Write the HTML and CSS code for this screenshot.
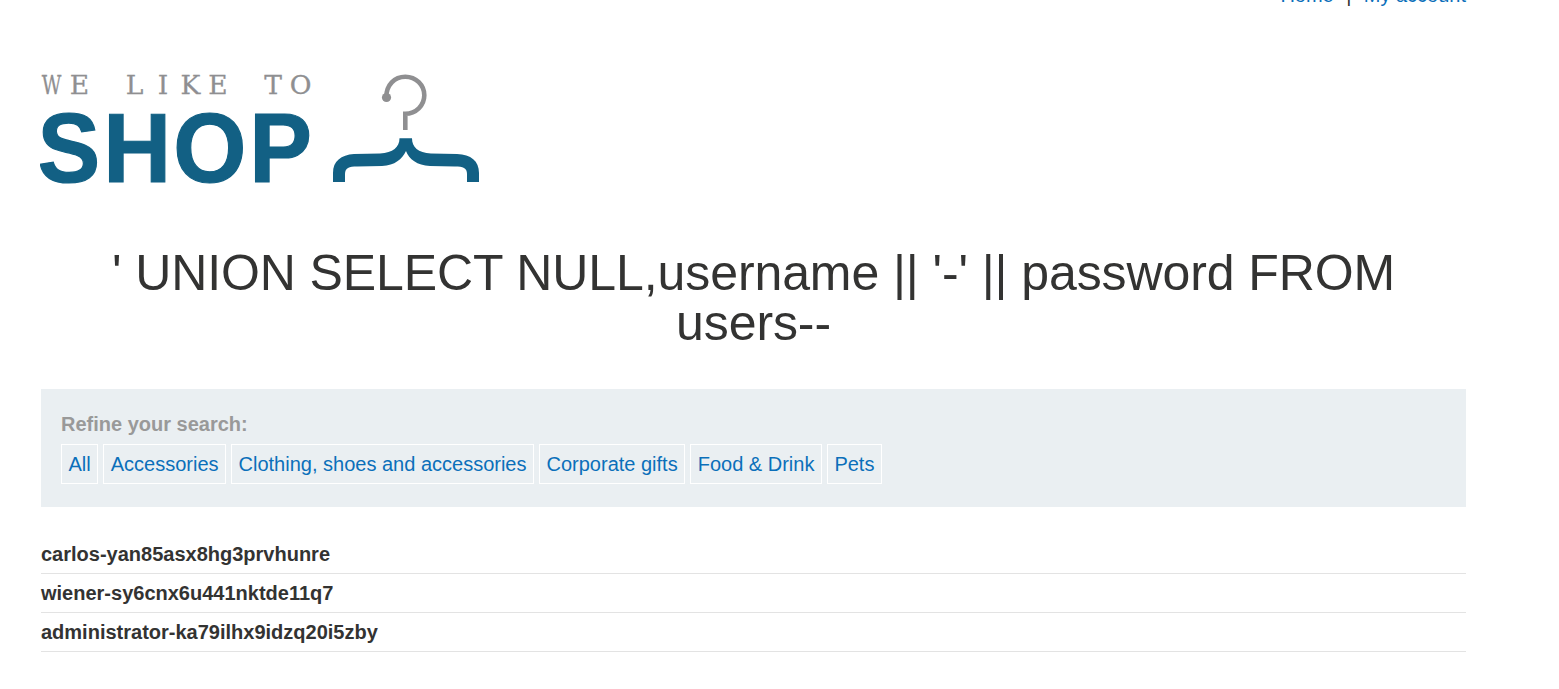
FILE: index.html
```
<!DOCTYPE html>
<html lang="en">
<head>
<meta charset="utf-8">
<title>We like to shop</title>
<link rel="stylesheet" href="styles.css">
</head>
<body>
<div class="container">
  <nav class="top-links"><a href="#">Home</a><span>|</span><a href="#">My account</a></nav>
  <header class="brand">
    <svg class="logo" width="440" height="120" viewBox="40 70 440 120" role="img" aria-label="We like to shop">
      <text class="tagline" transform="translate(51.5 94) scale(.72 1)" x="0" y="0">W</text>
      <text class="tagline" x="79.5 134.500 163 190.500 218 273 300.500" y="94">ELIKETO</text>
      <text class="wordmark" transform="scale(.95 1)" x="39.500 108.700 182.400 262.400" y="182">SHOP</text>
      <circle cx="386.500" cy="97.500" r="4.600" fill="#8f8f91"/>
      <path d="M386.300 97 C386.300 85 394.500 76.700 405.300 76.700 C416 76.700 424.300 85 424.300 95.300 C424.300 105.500 416 113.700 405.300 113.700 V130" fill="none" stroke="#8f8f91" stroke-width="4.600"/>
      <path d="M333 182 V173 C333 161 341 155 354 154 L380 153.500 C393 153 399.500 147 399.500 138.300 H412 C412 147 418 153 431 153.500 L457 154 C471 154.500 479 161 479 173 V182 H467 V174 C467 168 463 166.500 455 166.500 L430 166 C417 165.500 409 159 406 151 C402 159 395 165.500 382 166 L357 166.500 C349 166.500 345 168 345 174 V182 Z" fill="#126084"/>
    </svg>
  </header>
  <h1 class="title">' UNION SELECT NULL,username || '-' || password FROM users--</h1>
  <section class="filters">
    <strong class="filters-label">Refine your search:</strong>
    <div class="filter-list">
      <a href="#">All</a><a href="#">Accessories</a><a href="#">Clothing, shoes and accessories</a><a href="#">Corporate gifts</a><a href="#">Food &amp; Drink</a><a href="#">Pets</a>
    </div>
  </section>
  <table class="results">
    <tr><th>carlos-yan85asx8hg3prvhunre</th></tr>
    <tr><th>wiener-sy6cnx6u441nktde11q7</th></tr>
    <tr><th>administrator-ka79ilhx9idzq20i5zby</th></tr>
  </table>
</div>
</body>
</html>
```
FILE: styles.css
```
* { box-sizing: border-box; }
body {
  margin: 0;
  background: #fff;
  color: #333332;
  font: 20px/24px "Liberation Sans", Arial, sans-serif;
  overflow: hidden;
}
a { color: #0b6fba; text-decoration: none; }
.container { width: 1425px; margin-left: 41px; }
.top-links {
  display: flex;
  justify-content: flex-end;
  gap: 12.4px;
  height: 24px;
  margin-top: -17px;
}
.brand { margin: 63px 0 0 -1px; height: 120px; }
.logo { display: block; }
.tagline {
  font: 26.5px "DejaVu Serif", serif;
  fill: #8f8f91;
  stroke: #8f8f91;
  stroke-width: .3px;
  text-anchor: middle;
}
.wordmark {
  font: bold 99px "Liberation Sans", Arial, sans-serif;
  fill: #126084;
  stroke: #126084;
  stroke-width: 1.2px;
}
.title {
  margin: 58px 0 41px;
  padding: 0 50px;
  font-size: 50px;
  font-weight: 400;
  line-height: 50px;
  letter-spacing: -.1px;
  text-align: center;
}
.filters {
  height: 118px;
  padding: 23px 20px;
  background: #eaeff2;
}
.filters-label { display: block; color: #999; }
.filter-list { display: flex; gap: 5px; margin-top: 8px; }
.filter-list a { height: 40px; padding: 7px 6.5px; border: 1px solid #fff; }
.results { width: 100%; margin-top: 28px; border-spacing: 0; }
.results th {
  height: 39px;
  padding: 0;
  border-bottom: 1px solid #e3e3e3;
  text-align: left;
}
```
